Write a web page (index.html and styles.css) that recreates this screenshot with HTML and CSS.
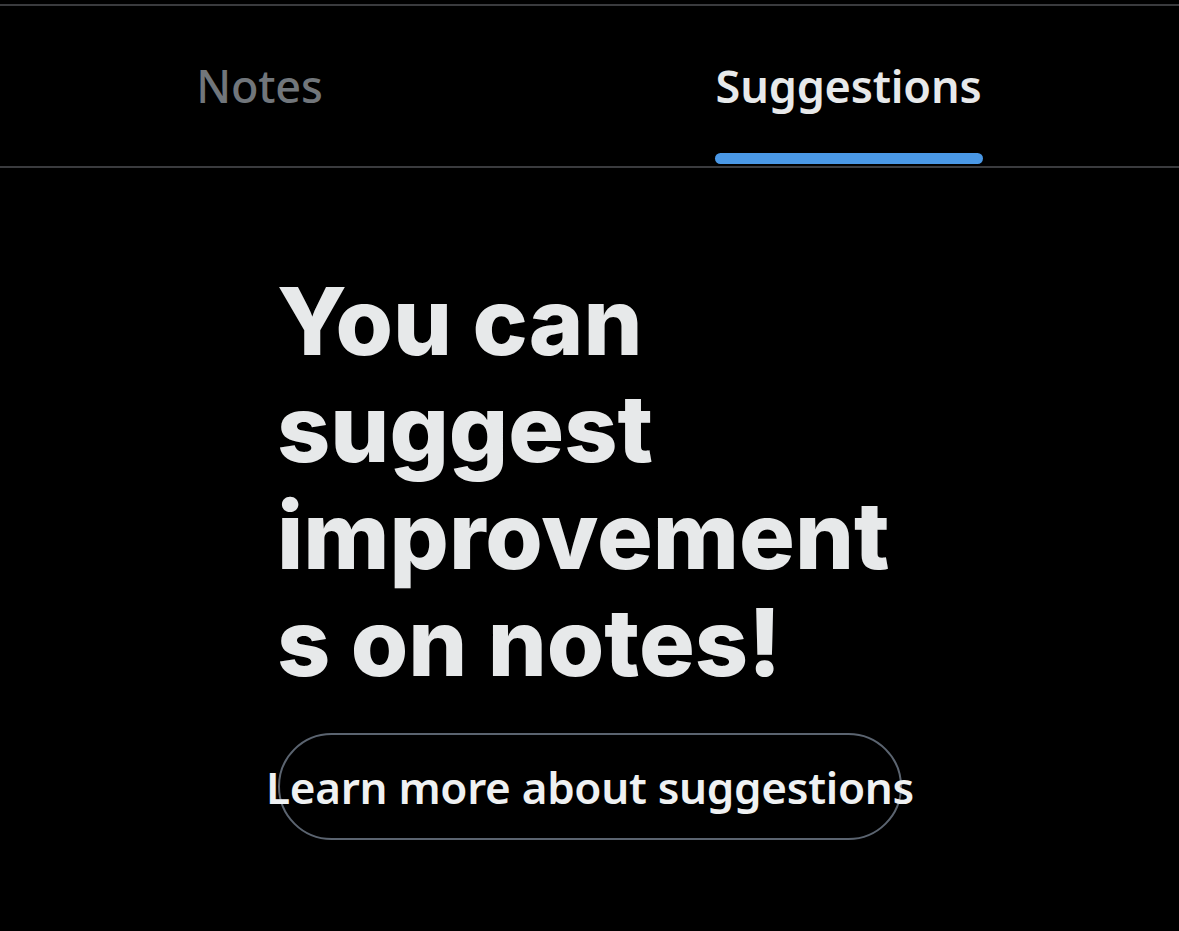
FILE: index.html
```html
<!DOCTYPE html>
<html lang="en">
<head>
<meta charset="utf-8">
<title>Suggestions</title>
<link rel="stylesheet" href="styles.css">
</head>
<body>
<div class="header">
  <nav class="tabs">
    <div class="tab">
      <span class="tab-label">Notes</span>
      <span class="indicator indicator-hidden"></span>
    </div>
    <div class="tab tab-active">
      <span class="tab-label">Suggestions</span>
      <span class="indicator"></span>
    </div>
  </nav>
</div>
<main class="content">
  <h1 class="title">You can suggest improvements on notes!</h1>
  <div class="button">Learn more about suggestions</div>
</main>
</body>
</html>
```
FILE: styles.css
```css
html, body {
  margin: 0;
  padding: 0;
  background: #000;
  height: 100%;
}
body {
  color: #e7e9ea;
  font-family: "Noto Sans", "Open Sans", sans-serif;
  overflow: hidden;
}
.header {
  margin-top: 4px;
  border-top: 2px solid #3a3b3e;
  border-bottom: 2px solid #3a3b3e;
}
.tabs {
  display: flex;
  margin-left: -35px;
  width: 1178px;
}
.tab {
  flex: 1;
  display: flex;
  flex-direction: column;
  align-items: center;
  padding-top: 57px;
  padding-bottom: 2px;
}
.tab-label {
  font-size: 45px;
  line-height: 1;
  font-weight: 500;
  letter-spacing: -0.2px;
  color: #71767b;
  white-space: nowrap;
}
.tab-active .tab-label {
  font-weight: 600;
  color: #e7e9ea;
}
.indicator {
  display: block;
  align-self: center;
  width: 268px;
  height: 11px;
  margin-top: 45px;
  border-radius: 6px;
  background: #4a98e6;
}
.indicator-hidden {
  visibility: hidden;
}
.content {
  padding-left: 277px;
  width: 625px;
}
.title {
  margin: 100px 0 0;
  font-family: "Inter", "Liberation Sans", sans-serif;
  font-weight: 800;
  font-size: 93px;
  line-height: 107px;
  letter-spacing: 0;
  overflow-wrap: anywhere;
}
.button {
  box-sizing: border-box;
  margin-top: 37px;
  margin-left: 1px;
  height: 107px;
  border: 2px solid #5b6470;
  border-radius: 54px;
  display: flex;
  align-items: center;
  justify-content: center;
  white-space: nowrap;
  font-size: 44px;
  font-weight: 600;
  letter-spacing: -0.3px;
  color: #eff1f2;
}
```
